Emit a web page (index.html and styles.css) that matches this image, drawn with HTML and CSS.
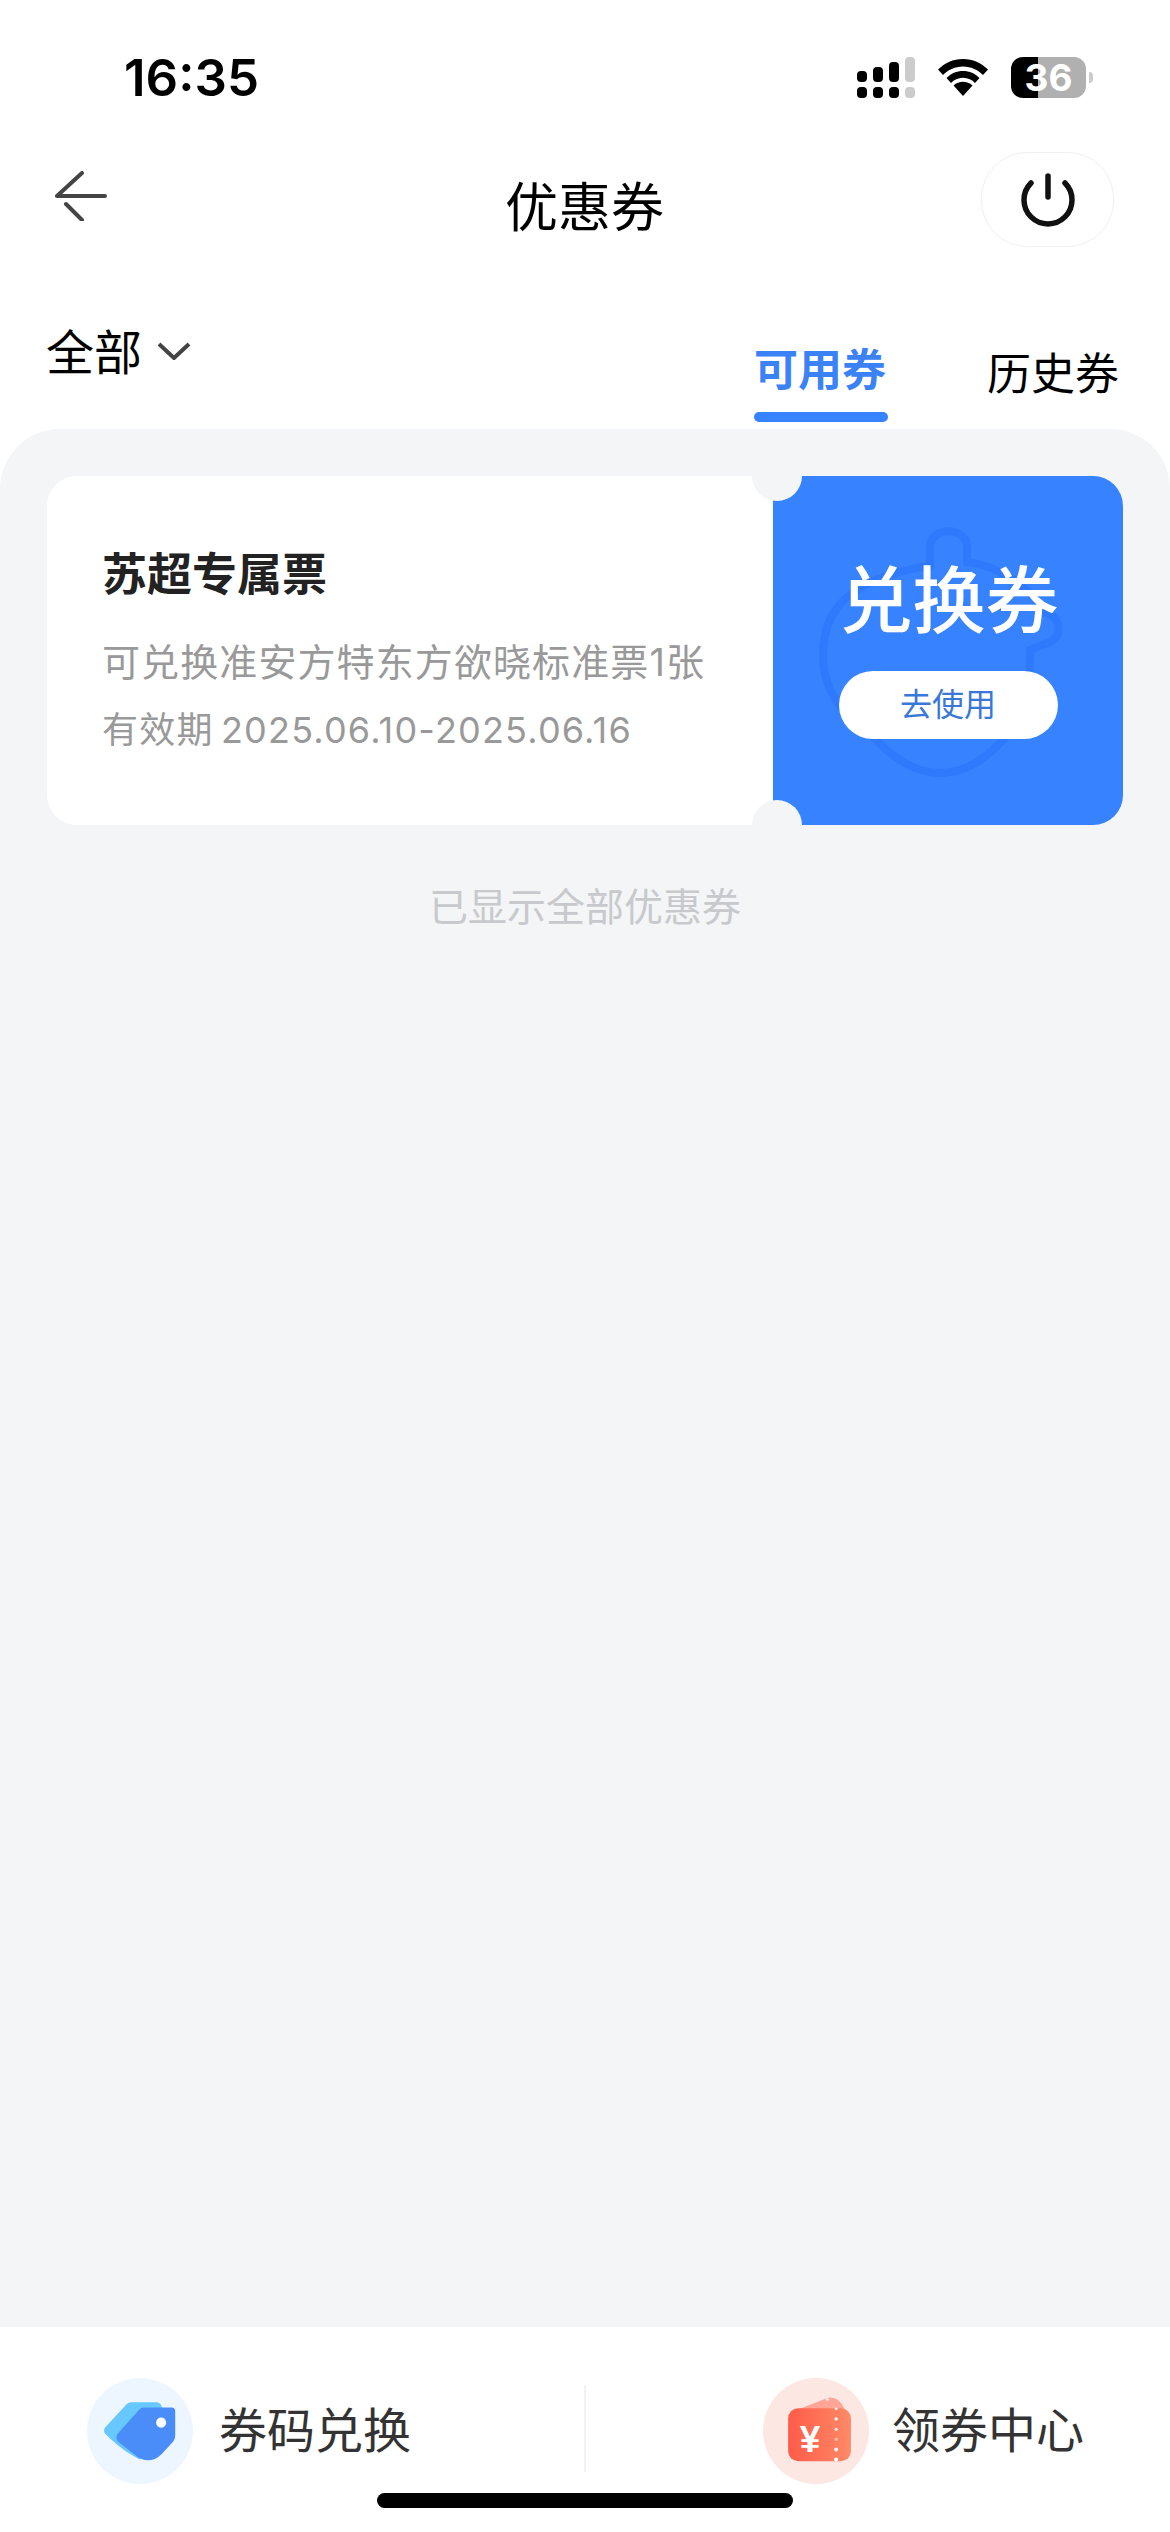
FILE: index.html
```html
<!DOCTYPE html>
<html lang="zh-CN">
<head>
  <meta charset="UTF-8">
  <meta name="viewport" content="width=device-width, initial-scale=1.0">
  <title>优惠券</title>
  <link rel="stylesheet" href="styles.css">
</head>
<body>
  <div class="status">
    <span class="time">16:35</span>
    <div class="status-icons">
      <div class="signal">
        <div class="sig-col"><i class="bar h1"></i><i class="dot"></i></div>
        <div class="sig-col"><i class="bar h2"></i><i class="dot"></i></div>
        <div class="sig-col"><i class="bar h3"></i><i class="dot"></i></div>
        <div class="sig-col off"><i class="bar h4"></i><i class="dot"></i></div>
      </div>
      <svg class="wifi" viewBox="0 0 50 37">
        <path d="M25 37 L15.5 26.5 C21 21.5 29 21.5 34.5 26.5 Z"/>
        <path d="M25 0 C15 0 7 4 0 10.5 L5 16 C10 11 17 7.500 25 7.500 C33 7.500 40 11 45 16 L50 10.500 C43 4 35 0 25 0 Z"/>
        <path d="M25 12 C18.500 12 13 14.500 8.500 19 L13 24 C16 21 20 18.800 25 18.800 C30 18.800 34 21 37 24 L41.500 19 C37 14.500 31.500 12 25 12 Z"/>
      </svg>
      <div class="battery">
        <div class="batt-body"><span class="batt-num">36</span></div>
        <i class="batt-nub"></i>
      </div>
    </div>
  </div>

  <div class="nav">
    <svg class="back" viewBox="0 0 52 50" fill="none">
      <path d="M2 25H50M2 25L27 2M11 33L27 49"/>
    </svg>
    <div class="title">优惠券</div>
    <div class="power">
      <svg viewBox="0 0 54 54" fill="none">
        <path d="M10 10A24 24 0 1 0 44 10"/>
        <path d="M27 3V24"/>
      </svg>
    </div>
  </div>

  <div class="filter-row">
    <div class="filter">
      <span>全部</span>
      <svg viewBox="0 0 34 18" fill="none"><path d="M2 2L17 16L32 2"/></svg>
    </div>
    <div class="tabs">
      <div class="tab active">可用券</div>
      <div class="tab">历史券</div>
    </div>
  </div>

  <div class="sheet">
    <div class="card">
      <div class="card-info">
        <div class="card-name">苏超专属票</div>
        <div class="card-desc">可兑换准安方特东方欲晓标准票1张</div>
        <div class="card-date">有效期 2025.06.10-2025.06.16</div>
      </div>
      <div class="card-side">
        <svg class="mascot" viewBox="0 0 350 349" fill="none">
          <path d="M157 90V71C157 50 194 50 194 71V86C230 90 260 115 272 137C290 140 290 165 272 168L257 174C258 215 245 250 227 267C205 290 185 297 167 297C140 297 118 280 100 261C65 235 50 210 50 181C50 150 60 127 90 110C110 100 135 92 157 90Z"/>
        </svg>
        <div class="side-label">兑换券</div>
        <div class="use-btn">去使用</div>
      </div>
      <i class="notch notch-top"></i>
      <i class="notch notch-bottom"></i>
    </div>
    <div class="all-shown">已显示全部优惠券</div>
  </div>

  <div class="bottom">
    <div class="action first">
      <div class="circle blue">
        <svg viewBox="0 0 316 316">
          <path fill="#66c8ff" d="M133 72H205C216 72 224 80 224 92L158 243C120 225 85 198 56 168C49 161 49 152 56 145L118 78C122 74 127 72 133 72Z"/>
          <path fill="#4a8cf8" d="M168 88H252C259 88 263 92 263 99V170C263 180 260 187 253 194L222 227C200 250 170 250 150 235L96 192C86 184 85 172 94 163L156 94C160 90 163 88 168 88Z"/>
          <circle fill="#fff" cx="221" cy="133" r="15"/>
        </svg>
      </div>
      <span>券码兑换</span>
    </div>
    <i class="divider"></i>
    <div class="action second">
      <div class="circle red">
        <svg viewBox="0 0 316 316">
          <defs>
            <linearGradient id="redfill" x1="0" y1="0" x2="1" y2="0">
              <stop offset="0" stop-color="#ff5b48"/>
              <stop offset="1" stop-color="#ff8a68"/>
            </linearGradient>
          </defs>
          <path fill="#ffa595" d="M110 92L190 60C205 55 222 60 235 78L262 125V170H110Z"/>
          <rect fill="url(#redfill)" x="75" y="90" width="187" height="158" rx="30"/>
          <g fill="#fff">
            <circle cx="192" cy="64" r="4"/>
            <circle cx="218" cy="92" r="4"/>
            <circle cx="218" cy="122" r="5"/>
            <circle cx="218" cy="153" r="5" opacity=".8"/>
            <circle cx="218" cy="183" r="5" opacity=".5"/>
            <circle cx="218" cy="213" r="6" opacity=".9"/>
            <circle cx="218" cy="243" r="6"/>
          </g>
          <text class="yen" x="140" y="222" text-anchor="middle">¥</text>
        </svg>
      </div>
      <span>领券中心</span>
    </div>
  </div>
  <div class="home-bar"></div>
</body>
</html>
```

FILE: styles.css
```css
* {
  margin: 0;
  padding: 0;
  box-sizing: border-box;
}
body {
  position: relative;
  display: flex;
  flex-direction: column;
  width: 1170px;
  height: 2532px;
  overflow: hidden;
  background-color: #fff;
  color: #000;
  font-family: Inter, "Noto Sans CJK SC", sans-serif;
}

/* status bar */
.status {
  display: flex;
  justify-content: space-between;
  height: 152px;
  padding: 57px 77px 0 124px;
}
.time {
  font-size: 51px;
  font-weight: 600;
  line-height: 42px;
}
.status-icons {
  display: flex;
  gap: 23px;
  height: 41px;
}
.signal {
  display: flex;
  gap: 6px;
}
.sig-col {
  display: flex;
  flex-direction: column;
  justify-content: flex-end;
  gap: 5px;
  width: 10px;
  height: 41px;
}
.sig-col i {
  display: block;
  background-color: #000;
  border-radius: 4px;
}
.sig-col.off i {
  background-color: #ccc;
}
.dot {
  height: 11px;
}
.h1 {
  height: 11px;
}
.h2 {
  height: 15px;
}
.h3 {
  height: 20px;
}
.h4 {
  height: 25px;
}
.wifi {
  width: 50px;
  height: 37px;
  margin-top: 2px;
}
.battery {
  display: flex;
  align-items: center;
  gap: 3px;
}
.batt-body {
  display: flex;
  align-items: center;
  justify-content: center;
  width: 75px;
  height: 41px;
  border-radius: 12px;
  background: linear-gradient(to right, #000 36%, #b0b0b0 36%);
}
.batt-num {
  color: #fff;
  font-size: 37px;
  font-weight: 700;
  line-height: 41px;
}
.batt-nub {
  width: 4px;
  height: 11px;
  border-radius: 0 4px 4px 0;
  background-color: #ccc;
}

/* nav */
.nav {
  display: grid;
  grid-template-columns: 1fr auto 1fr;
  height: 95px;
  padding: 0 56px 0 55px;
}
.back {
  width: 52px;
  height: 50px;
  margin-top: 19px;
  stroke: #444;
  stroke-width: 4;
  stroke-linecap: round;
  stroke-linejoin: round;
}
.title {
  margin-top: 25px;
  font-size: 53px;
  line-height: 62px;
}
.power {
  display: flex;
  align-items: center;
  justify-content: center;
  justify-self: end;
  width: 133px;
  height: 95px;
  border: 1.5px solid #f0f0f0;
  border-radius: 46px;
}
.power svg {
  width: 54px;
  height: 54px;
  stroke: #111;
  stroke-width: 5.5;
  stroke-linecap: round;
}

/* filter + tabs */
.filter-row {
  display: flex;
  justify-content: space-between;
  height: 182px;
  padding: 0 51px 0 46px;
}
.filter {
  display: flex;
  align-items: center;
  gap: 15px;
  height: 60px;
  margin-top: 72px;
  font-size: 48px;
}
.filter svg {
  width: 34px;
  height: 18px;
  margin-top: 3px;
  stroke: #444;
  stroke-width: 4;
}
.tabs {
  display: flex;
  gap: 101px;
  padding-top: 93px;
}
.tab {
  font-size: 44px;
  line-height: 60px;
  margin-top: 4px;
}
.tab.active {
  position: relative;
  height: 82px;
  margin-top: 0;
  color: #3a82f6;
  font-weight: 700;
}
.tab.active::after {
  content: "";
  position: absolute;
  left: 0;
  right: -2px;
  bottom: 0;
  height: 10px;
  border-radius: 5px;
  background-color: #3682ff;
}

/* list */
.sheet {
  flex: 1;
  padding: 47px 47px 0;
  border-radius: 60px 60px 0 0;
  background-color: #f3f5f7;
}
.card {
  position: relative;
  display: flex;
  height: 349px;
  overflow: hidden;
  border-radius: 30px;
}
.card-info {
  width: 726px;
  padding: 70px 0 0 55px;
  background-color: #fff;
}
.card-name {
  font-size: 45px;
  font-weight: 600;
  line-height: 58px;
  color: #222;
}
.card-desc {
  margin-top: 33px;
  font-size: 38px;
  line-height: 50px;
  letter-spacing: 1.1px;
  color: #999;
}
.card-date {
  margin-top: 18px;
  font-size: 36px;
  line-height: 50px;
  letter-spacing: 1.2px;
  word-spacing: -4px;
  color: #999;
}
.card-side {
  position: relative;
  flex: 1;
  display: flex;
  flex-direction: column;
  align-items: center;
  padding-top: 85px;
  background-color: #3682ff;
}
.mascot {
  position: absolute;
  top: 0;
  left: 0;
  width: 350px;
  height: 349px;
  stroke: #2f7afc;
  stroke-width: 8;
}
.side-label {
  position: relative;
  padding-left: 2px;
  font-size: 73px;
  font-weight: 500;
  line-height: 80px;
  color: #fff;
}
.use-btn {
  position: relative;
  width: 219px;
  height: 68px;
  margin-top: 30px;
  border-radius: 34px;
  background-color: #fff;
  color: #3a78d8;
  font-size: 32px;
  line-height: 68px;
  text-align: center;
}
.notch {
  position: absolute;
  left: 705px;
  width: 50px;
  height: 50px;
  border-radius: 50%;
  background-color: #f3f5f7;
}
.notch-top {
  top: -25px;
}
.notch-bottom {
  bottom: -25px;
}
.all-shown {
  margin-top: 54px;
  font-size: 39px;
  line-height: 56px;
  text-align: center;
  color: #c8c9cc;
}

/* bottom actions */
.bottom {
  display: flex;
  height: 205px;
  background-color: #fff;
}
.action {
  display: flex;
  align-items: center;
  gap: 26px;
  height: 106px;
  margin-top: 51px;
  font-size: 48px;
  color: #333;
}
.action span {
  margin-bottom: 8px;
}
.action.first {
  width: 584px;
  padding-left: 87px;
}
.action.second {
  padding-left: 177px;
}
.action.second span {
  margin-left: -3px;
}
.divider {
  width: 2px;
  height: 87px;
  margin-top: 58px;
  background-color: #f2f2f2;
}
.circle {
  width: 106px;
  height: 106px;
  border-radius: 50%;
}
.circle svg {
  display: block;
  width: 106px;
  height: 106px;
}
.circle.blue {
  background-color: #edf6ff;
}
.circle.red {
  background-color: #fde7e2;
}
.yen {
  font-family: "Liberation Sans", sans-serif;
  font-size: 110px;
  font-weight: 700;
  fill: #fff;
}
.home-bar {
  position: absolute;
  left: 377px;
  bottom: 24px;
  width: 416px;
  height: 15px;
  border-radius: 8px;
  background-color: #000;
}
```
